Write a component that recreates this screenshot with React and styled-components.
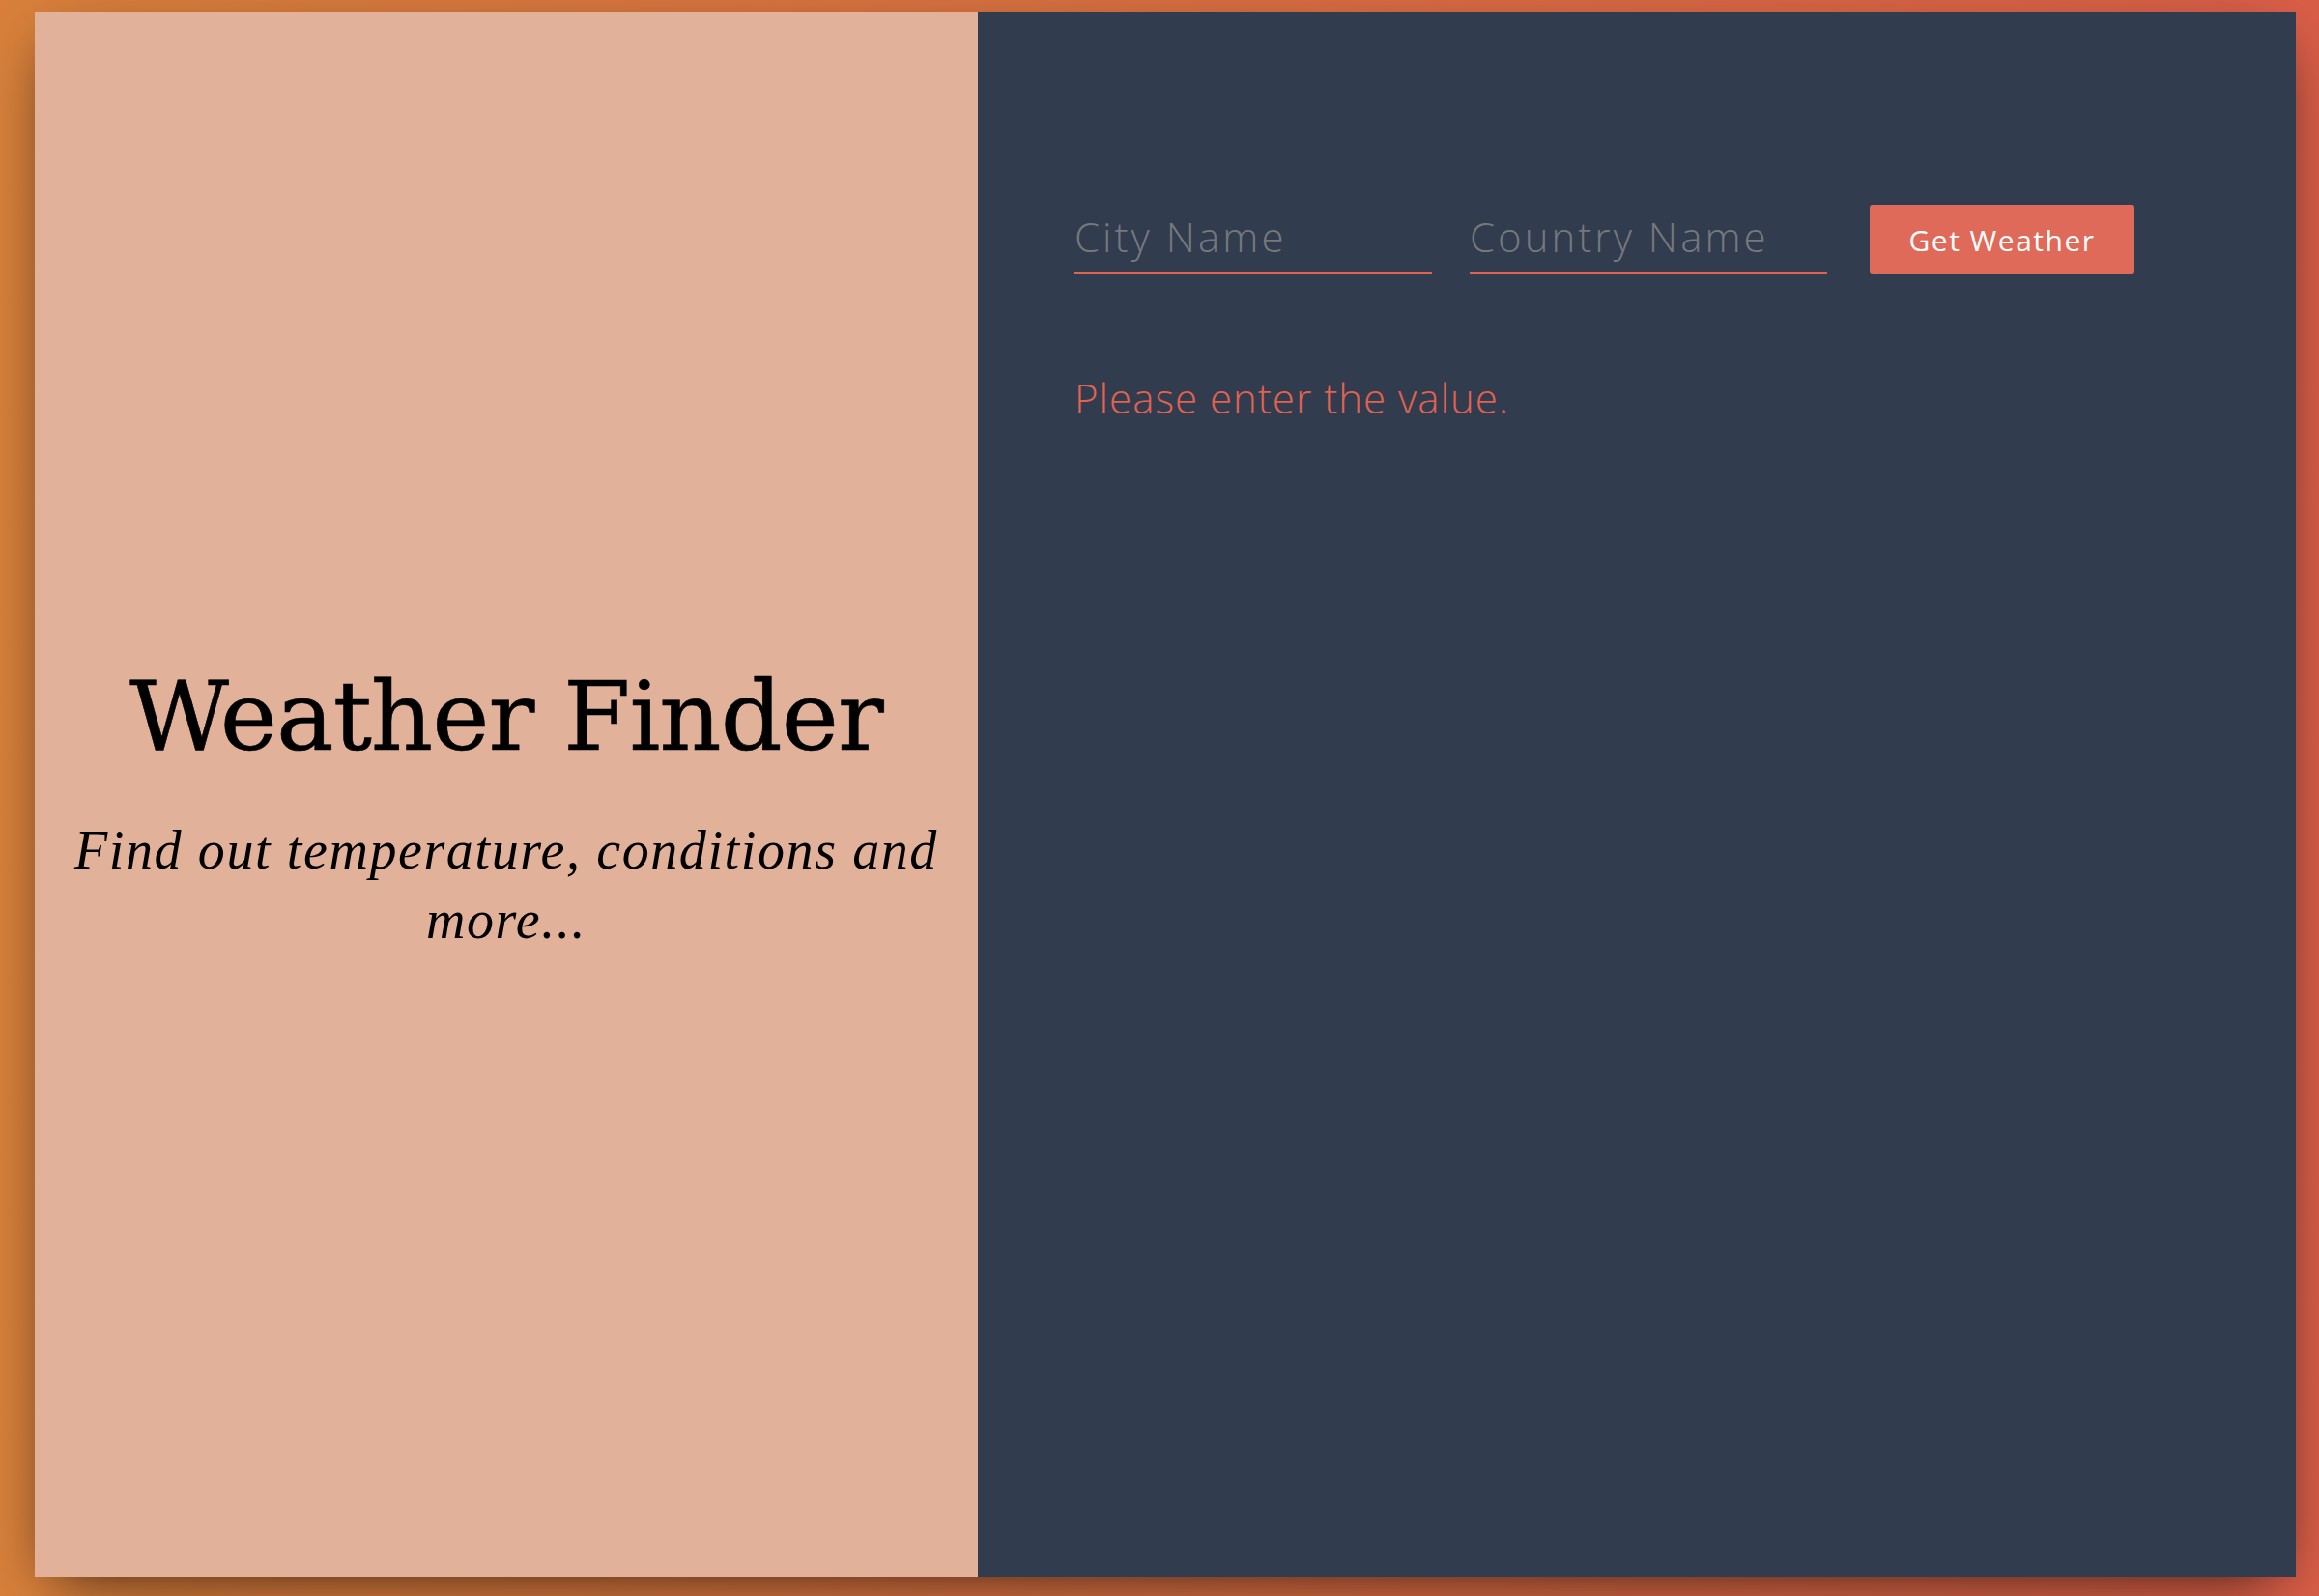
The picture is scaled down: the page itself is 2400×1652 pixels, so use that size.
import styled, { createGlobalStyle } from "styled-components"

const GlobalStyle = createGlobalStyle`
  html, body {
    margin: 0;
    padding: 0;
  }
  body {
    background: linear-gradient(to right, #d8803b, #d95e48);
    font-family: "Open Sans", "Noto Sans", sans-serif;
  }
`

const App = () => {
  return (
    <>
      <GlobalStyle />
      <Wrapper>
        <Main>
          <TitlePanel>
            <Title>Weather Finder</Title>
            <Subtitle>Find out temperature, conditions and more...</Subtitle>
          </TitlePanel>
          <FormPanel>
            <Form onSubmit={e => e.preventDefault()}>
              <Input type="text" name="city" placeholder="City Name" />
              <Input type="text" name="country" placeholder="Country Name" />
              <Button>Get Weather</Button>
            </Form>
            <Error>Please enter the value.</Error>
          </FormPanel>
        </Main>
      </Wrapper>
    </>
  )
}

const Wrapper = styled.div`
  box-sizing: border-box;
  height: 1652px;
  padding: 12px 24px 20px 36px;
`

const Main = styled.div`
  display: grid;
  grid-template-columns: 976px 1fr;
  height: 1620px;
  box-shadow: 0 20px 60px -20px rgba(0, 0, 0, 0.75);
`

const TitlePanel = styled.div`
  background-color: #e2b199;
  display: flex;
  flex-direction: column;
  justify-content: center;
  align-items: center;
  text-align: center;
  padding: 26px 30px 0;
  color: #000;
`

const Title = styled.h1`
  margin: 0 0 42px;
  font-family: "DejaVu Serif", serif;
  font-weight: normal;
  font-size: 100px;
  line-height: 120px;
  letter-spacing: -1px;
  -webkit-text-stroke: 0.6px #000;
`

const Subtitle = styled.p`
  margin: 0;
  font-family: "Liberation Serif", serif;
  font-style: italic;
  font-size: 56px;
  line-height: 72px;
  letter-spacing: 1.6px;
`

const FormPanel = styled.div`
  background-color: #313c4f;
  padding: 200px 0 0 100px;
`

const Form = styled.form`
  display: flex;
  align-items: stretch;
  height: 72px;
`

const Input = styled.input`
  box-sizing: border-box;
  width: 370px;
  height: 72px;
  margin-right: 39px;
  padding: 0 0 6px;
  background: transparent;
  border: 0;
  border-bottom: solid 2px #e0634f;
  border-radius: 0;
  color: #fff;
  font-family: "Open Sans", sans-serif;
  font-weight: 300;
  font-size: 42px;
  letter-spacing: 3px;
  outline: none;
  &::placeholder {
    color: #76787b;
  }
`

const Button = styled.button`
  box-sizing: border-box;
  width: 274px;
  margin-left: 5px;
  border: 0;
  border-radius: 3px;
  background-color: #e06a5a;
  color: #fff;
  font-family: "Open Sans", sans-serif;
  font-weight: 400;
  font-size: 30px;
  letter-spacing: 1.5px;
  cursor: pointer;
`

const Error = styled.p`
  margin: 99px 0 0;
  color: #e2624f;
  font-family: "Open Sans", sans-serif;
  font-weight: 300;
  font-size: 42px;
  letter-spacing: 1px;
`

export default App
